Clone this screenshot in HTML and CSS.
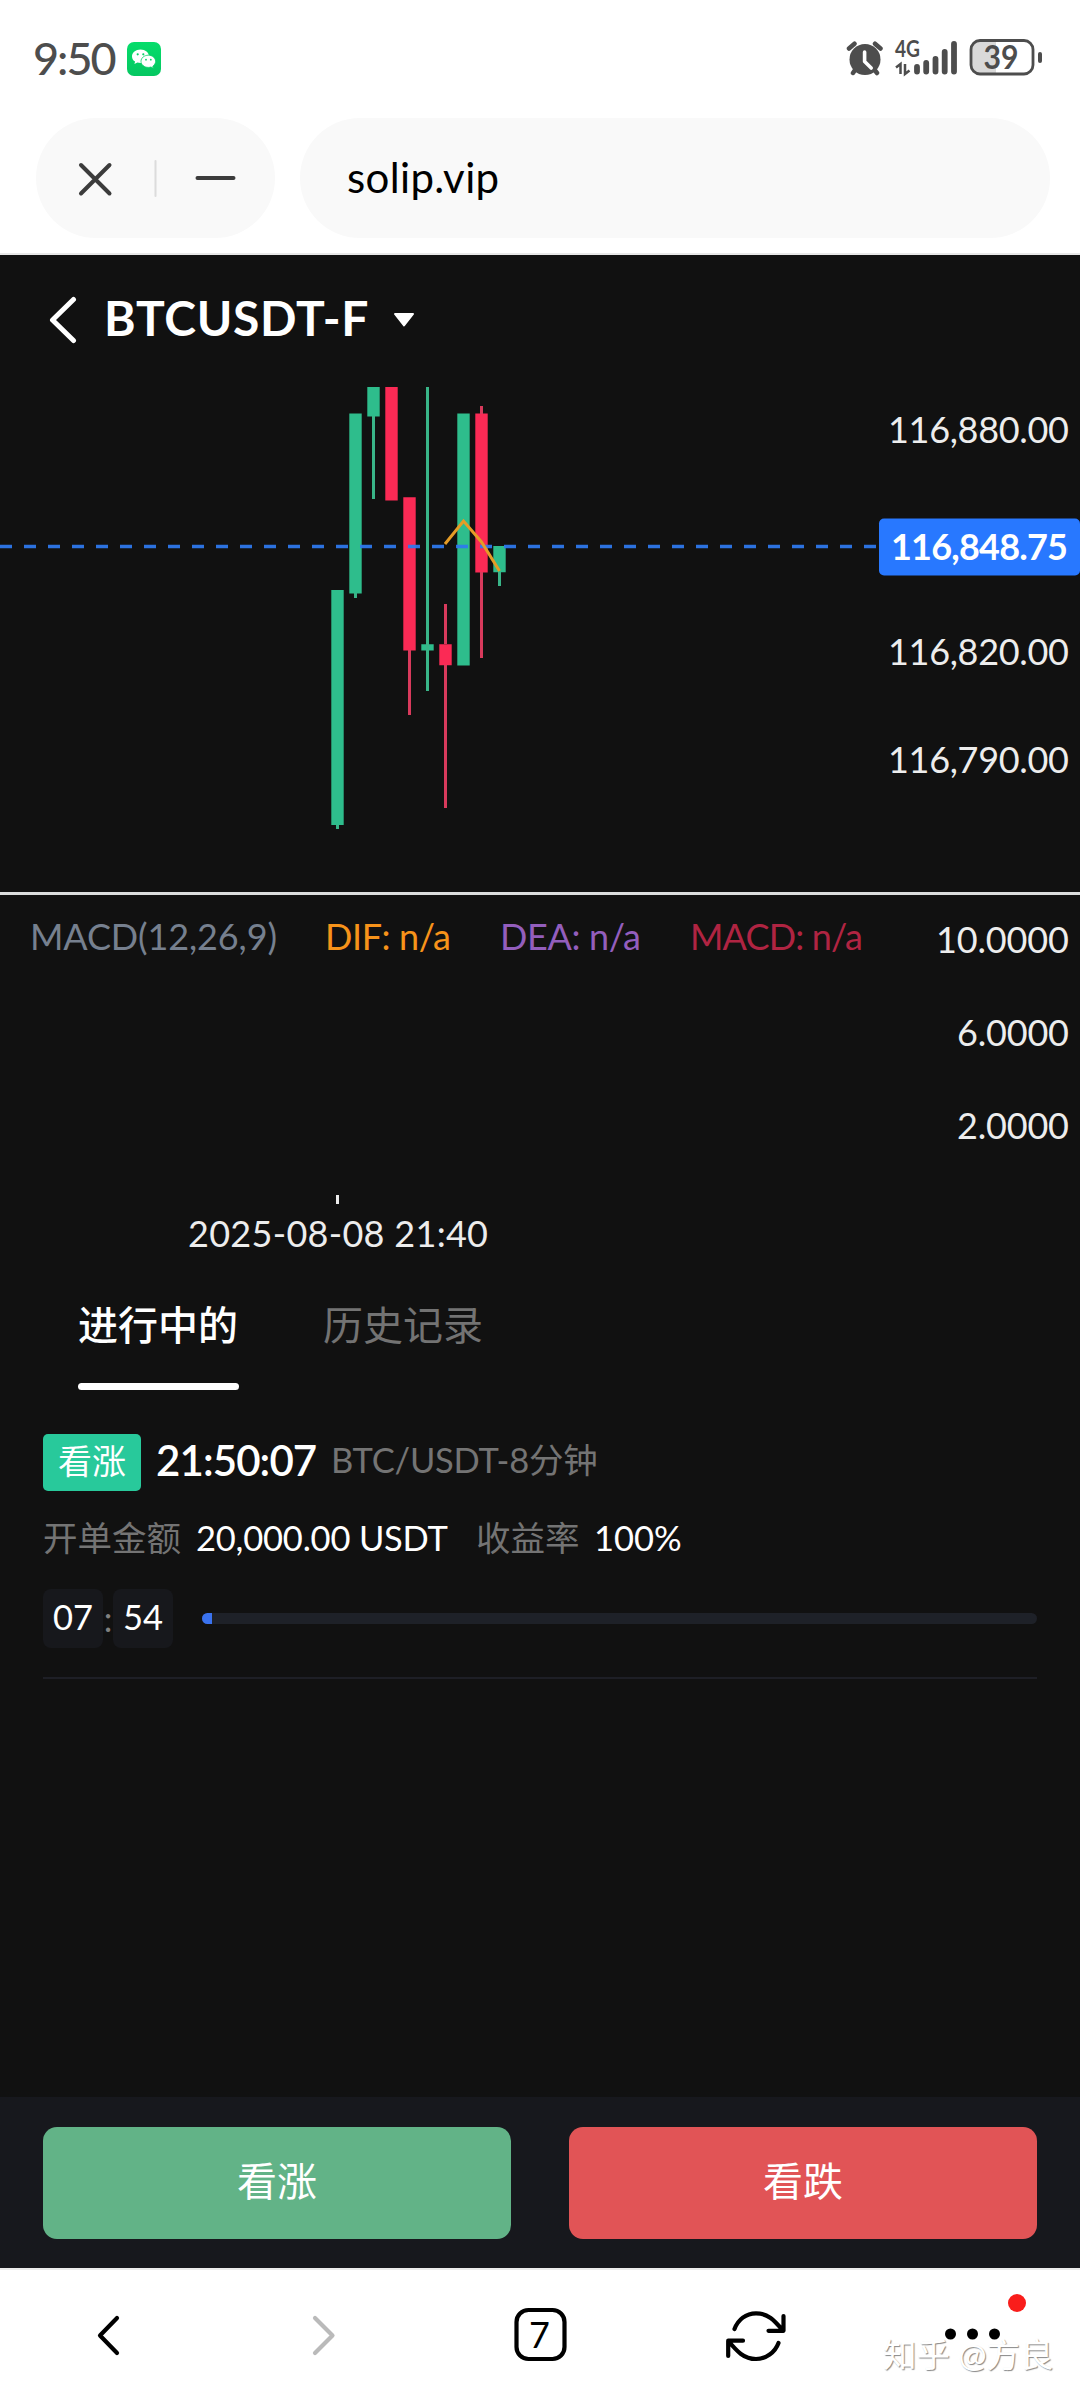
FILE: index.html
```html
<!DOCTYPE html>
<html lang="zh-CN">
<head>
<meta charset="utf-8">
<title>BTCUSDT-F</title>
<link rel="stylesheet" href="styles.css">
</head>
<body>
<header class="status">
  <span class="clock">9:50</span>
  <svg class="wechat" width="34" height="34" viewBox="0 0 34 34">
    <defs><linearGradient id="wg" x1="0" y1="0" x2="0" y2="1"><stop offset="0" stop-color="#06dd6b"/><stop offset="1" stop-color="#05c761"/></linearGradient></defs>
    <rect width="34" height="34" rx="7" fill="url(#wg)"/>
    <path d="M13.5 7.5c-4.800 0-8.500 3-8.500 6.900 0 2.200 1.200 4 3.100 5.200l-.7 2.500 3-1.500c1 .3 2 .5 3.100.5 4.800 0 8.500-3 8.500-6.700s-3.700-6.900-8.500-6.900z" fill="#fff"/>
    <path d="M21.300 13.200c-4 0-7.300 2.700-7.300 6.100s3.300 6.100 7.300 6.100c.9 0 1.800-.1 2.600-.4l2.500 1.300-.6-2.100c1.700-1.200 2.800-2.900 2.800-4.900 0-3.400-3.300-6.100-7.300-6.100z" fill="#fff" stroke="#06cf66" stroke-width=".8"/>
    <g fill="#06cf66"><circle cx="10.700" cy="12.300" r="1.100"/><circle cx="16.300" cy="12.300" r="1.100"/><circle cx="19" cy="17.700" r=".9"/><circle cx="23.800" cy="17.700" r=".9"/></g>
  </svg>
  <svg class="indicators" width="200" height="56" viewBox="846 28 200 56">
    <g stroke="#4d4d4d" stroke-width="4.500" stroke-linecap="round" fill="none">
      <path d="M849 48.500l5.500-4.800M880.500 48.500l-5.500-4.800M856 68.500l-3 4.500M873.500 68.500l3.500 4.500"/>
    </g>
    <circle cx="865" cy="59.500" r="15.500" fill="#4d4d4d"/>
    <path d="M864.600 52v9.500l6.600 6.500" fill="none" stroke="#fff" stroke-width="3.600" stroke-linecap="round" stroke-linejoin="round"/>
    <text class="net" x="895" y="57" textLength="25" lengthAdjust="spacingAndGlyphs">4G</text>
    <path d="M896 67.500l4.500-3.500v10M909.500 70.500l-4.500 3.500V64" fill="none" stroke="#4d4d4d" stroke-width="2.500"/>
    <g stroke="#4d4d4d" stroke-width="5.800" stroke-linecap="round"><path d="M917 67v4.500M926.200 63v8.500M935.500 59v12.500M944.700 52v19.500M954 44v27.500"/></g>
    <path d="M979 40.500h17v33h-17a8 8 0 0 1-8-8v-17a8 8 0 0 1 8-8z" fill="#d9d9d9"/>
    <rect x="971" y="40.500" width="62" height="33.500" rx="9" fill="none" stroke="#4d4d4d" stroke-width="2.800"/>
    <rect x="1038" y="52" width="4" height="11" rx="2" fill="#4d4d4d"/>
    <text class="level" x="983.500" y="69" textLength="35" lengthAdjust="spacingAndGlyphs">39</text>
  </svg>
</header>

<nav class="address">
  <div class="pill controls">
    <svg width="239" height="120" viewBox="36.500 118 239 120" fill="none" stroke="#3c3c3c" stroke-width="4" stroke-linecap="round">
      <path d="M81.500 165l28.500 28.500M110 165L81.500 193.500M198 178h36"/>
      <path d="M156 161v35" stroke="#dcdcdc" stroke-width="2"/>
    </svg>
  </div>
  <div class="pill url">solip.vip</div>
</nav>

<main class="trade">
  <div class="pair">
    <svg width="28" height="50" viewBox="0 0 28 50"><path d="M24.500 4.500L3.500 25L24.500 45.500" fill="none" stroke="#fff" stroke-width="5" stroke-linecap="round" stroke-linejoin="round"/></svg>
    <h1>BTCUSDT-F</h1>
    <svg width="22" height="16" viewBox="0 0 22 16"><path d="M2 2h18L11 13.500z" fill="#fff" stroke="#fff" stroke-width="2" stroke-linejoin="round"/></svg>
  </div>

  <svg class="chart" width="1080" height="883" viewBox="0 387 1080 883">
    <g class="up">
      <path d="M331.300 590h12.400v235h-12.400zM349.300 413.500h12.400v180h-12.400zM367.300 387h12.400v29.500h-12.400zM421.300 644.300h12.400v6.300h-12.400zM457.300 413.500h12.400v252h-12.400zM493.300 546h12.400v26.300h-12.400z"/>
      <path class="wick" d="M336 825h3v4h-3zM354 593h3v5h-3zM372 416h3v83h-3zM426 387h3v304h-3zM498 572h3v14h-3z"/>
    </g>
    <g class="down">
      <path d="M385.300 387h12.400v113.500h-12.400zM403.300 497.300h12.400v153.200h-12.400zM439.300 644.300h12.400v21h-12.400zM475.300 413.500h12.400v159h-12.400z"/>
      <path class="wick" d="M408 650h3v65h-3zM444 604h3v40h-3zM444 665h3v143h-3zM480 406h3v8h-3zM480 572h3v86h-3z"/>
    </g>
    <path d="M0 546.500H878" stroke="#2f7af0" stroke-width="3.600" stroke-dasharray="12 12" opacity=".93"/>
    <path d="M445 544L463.500 521L481.500 542L499.500 571" fill="none" stroke="#e59c26" stroke-width="3"/>
    <rect x="879" y="518.500" width="201" height="57" rx="5" fill="#2878ff"/>
    <g class="axis">
      <text x="888" y="443" textLength="181">116,880.00</text>
      <text x="888" y="665" textLength="181">116,820.00</text>
      <text x="888" y="773" textLength="181">116,790.00</text>
      <text class="now" x="891" y="559.500" textLength="177">116,848.75</text>
      <text x="936" y="952.500" textLength="133">10.0000</text>
      <text x="957" y="1045.500" textLength="112">6.0000</text>
      <text x="957" y="1138.500" textLength="112">2.0000</text>
      <text x="188" y="1247" textLength="300">2025-08-08 21:40</text>
    </g>
    <path d="M0 893.500H1080" stroke="#dcdddd" stroke-width="3"/>
    <path d="M337.500 1195v9" stroke="#ececec" stroke-width="3"/>
    <g class="legend">
      <text x="30" y="950" textLength="247" fill="#76808f">MACD(12,26,9)</text>
      <text x="325" y="950" textLength="126" fill="#f7931a">DIF: n/a</text>
      <text x="500" y="950" textLength="141" fill="#935ebd">DEA: n/a</text>
      <text x="690" y="950" textLength="173" fill="#b02442">MACD: n/a</text>
    </g>
  </svg>

  <div class="tabs">
    <span class="tab active">进行中的</span>
    <span class="tab">历史记录</span>
  </div>

  <section class="order">
    <div class="row head">
      <span class="badge">看涨</span>
      <span class="time">21:50:07</span>
      <span class="muted product">BTC/USDT-8分钟</span>
    </div>
    <div class="row detail">
      <span class="muted">开单金额</span>
      <span class="amount">20,000.00 USDT</span>
      <span class="muted rate">收益率</span>
      <span class="percent">100%</span>
    </div>
    <div class="row timer">
      <span class="digit">07</span><span class="colon">:</span><span class="digit">54</span>
      <div class="track"><div class="fill"></div></div>
    </div>
  </section>

  <footer class="actions">
    <div class="btn buy">看涨</div>
    <div class="btn sell">看跌</div>
  </footer>
</main>

<footer class="browser">
  <svg width="1080" height="130" viewBox="0 2270 1080 130" fill="none" stroke="#000" stroke-width="4.200" stroke-linecap="round" stroke-linejoin="round">
    <path d="M117 2318L100 2335.500L117 2353"/>
    <path d="M315 2318L332.500 2335.500L315 2353" stroke="#bababa"/>
    <rect x="516.500" y="2310" width="48" height="49" rx="12"/>
    <text class="count" x="539.500" y="2348" text-anchor="middle">7</text>
    <path d="M734.500 2329C738 2319.500 746 2313.300 756 2313.300C768 2313.300 774 2320 783 2330.500M783.500 2316V2330.800H768.500"/>
    <path d="M778.500 2343C775 2352.500 766 2359 756 2359C744 2359 737 2351.500 728.500 2341M728.200 2356V2340.700H743"/>
    <g fill="#000" stroke="none"><circle cx="950.500" cy="2334" r="5.500"/><circle cx="972.500" cy="2334" r="5.500"/><circle cx="994.500" cy="2334" r="5.500"/></g>
    <circle cx="1017" cy="2303" r="9" fill="#f91d1b" stroke="none"/>
  </svg>
  <span class="watermark">知乎 @方良</span>
</footer>
</body>
</html>
```
FILE: styles.css
```css
* { box-sizing: border-box; }
body {
  margin: 0;
  width: 1080px;
  height: 2400px;
  display: flex;
  flex-direction: column;
  background: #fff;
  font-family: Lato, "Noto Sans CJK SC", sans-serif;
  overflow: hidden;
}
svg { display: block; flex: none; }

.status {
  height: 118px;
  display: flex;
  align-items: flex-start;
  padding: 28px 34px 0 33px;
}
.clock {
  width: 94px;
  margin-top: 10px;
  font-size: 45px;
  line-height: 40px;
  font-weight: 500;
  color: #4d4d4d;
  letter-spacing: -2px;
}
.wechat { margin-top: 14px; }
.indicators { margin-left: auto; }
.net { font-size: 22px; font-weight: 700; fill: #4d4d4d; }
.level { font-size: 32px; font-weight: 700; fill: #4d4d4d; }

.address {
  height: 137px;
  display: flex;
  gap: 25px;
  padding: 0 30px 15px 36px;
  border-bottom: 2px solid #e8e8e8;
}
.pill { border-radius: 60px; background: #f9f9f9; }
.controls { width: 239px; }
.url {
  flex: 1;
  padding-left: 47px;
  font-size: 42px;
  line-height: 119px;
  letter-spacing: .35px;
  color: #000;
}

.trade {
  height: 2013px;
  display: flex;
  flex-direction: column;
  background: #111;
  color: #fff;
}
.pair {
  height: 130px;
  margin-bottom: 2px;
  display: flex;
  align-items: center;
  padding-left: 49px;
}
.pair h1 {
  width: 264px;
  margin: 0 25px 0 27px;
  padding-bottom: 4px;
  font-size: 48px;
  line-height: 60px;
  letter-spacing: .7px;
  white-space: nowrap;
}
.up { fill: #2ebd8c; }
.down { fill: #fb2a55; }
.up .wick { fill: #39b588; }
.down .wick { fill: #d93a5c; }
.axis { font-size: 36px; fill: #ededed; }
.axis .now { font-weight: 700; fill: #fff; }
.legend { font-size: 36px; }

.tabs {
  height: 120px;
  display: flex;
  gap: 84px;
  padding-left: 78px;
}
.tab {
  position: relative;
  width: 161px;
  font-size: 40px;
  line-height: 111px;
  color: #737373;
  white-space: nowrap;
}
.tab.active {
  font-weight: 500;
  color: #fff;
}
.tab.active::after {
  content: "";
  position: absolute;
  left: 0;
  right: 0;
  bottom: 0;
  height: 7px;
  border-radius: 4px;
  background: #fff;
}

.order {
  height: 289px;
  margin: 0 43px;
  padding-top: 44px;
  border-bottom: 2px solid #1e1f26;
}
.row {
  display: flex;
  align-items: center;
  font-size: 34.500px;
  line-height: 50px;
  white-space: nowrap;
}
.muted { color: #747474; }
.head { height: 57px; }
.badge {
  width: 98px;
  height: 57px;
  border-radius: 5px;
  background: #28c99b;
  line-height: 53px;
  text-align: center;
  font-size: 34px;
}
.time {
  width: 161px;
  margin: 0 14px 0 15px;
  padding-bottom: 6px;
  font-size: 42px;
  font-weight: 600;
  letter-spacing: -.9px;
}
.product { padding-bottom: 6px; letter-spacing: -.2px; }
.detail { height: 98px; padding-bottom: 5px; }
.amount { width: 252px; margin: 0 28px 0 15px; letter-spacing: -.2px; }
.rate { width: 104px; }
.percent { margin-left: 14px; }
.timer { height: 59px; }
.digit {
  width: 60px;
  height: 59px;
  border-radius: 8px;
  background: #17181c;
  line-height: 56px;
  text-align: center;
}
.colon { width: 10px; text-align: center; color: #808080; }
.track {
  flex: 1;
  height: 11px;
  margin-left: 29px;
  border-radius: 6px;
  background: #1e2128;
  overflow: hidden;
}
.fill { width: 10px; height: 11px; background: #3a72ee; }

.actions {
  height: 171px;
  margin-top: auto;
  display: flex;
  gap: 58px;
  padding: 30px 43px 29px;
  background: #17181d;
}
.btn {
  flex: 1;
  border-radius: 14px;
  font-size: 40px;
  line-height: 108px;
  text-align: center;
}
.buy { background: #62b387; }
.sell { background: #e15456; }

.browser {
  position: relative;
  height: 132px;
  border-top: 2px solid #ececec;
}
.count { font-size: 36px; fill: #000; stroke: none; }
.watermark {
  position: absolute;
  left: 883px;
  top: 60px;
  font-size: 33.500px;
  line-height: 48px;
  color: #fff;
  text-shadow: 1px 1px 1px #888;
  white-space: nowrap;
}
```
